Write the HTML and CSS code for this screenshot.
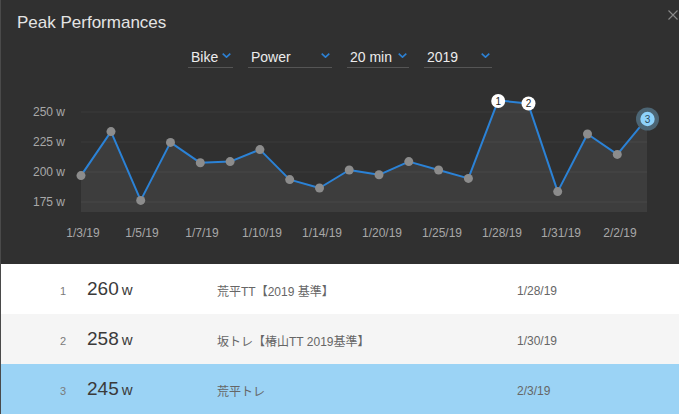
FILE: index.html
```html
<!DOCTYPE html>
<html>
<head>
<meta charset="utf-8">
<link rel="stylesheet" href="styles.css">
</head>
<body>
<div class="modal">
  <section class="top">
    <h1 class="title">Peak Performances</h1>
    <button class="close" aria-label="Close">
      <svg width="10" height="10" viewBox="0 0 10 10"><path d="M0.5 0.5L9.5 9.5M9.5 0.5L0.5 9.5" stroke="#8a8a8a" stroke-width="1.1" fill="none"/></svg>
    </button>
    <div class="filters">
      <div class="select w-bike"><span>Bike</span><svg class="chev" width="9" height="5" viewBox="0 0 9 5"><path d="M0.7 0.7L4.5 4.2L8.3 0.7" stroke="#2c80d3" stroke-width="1.6" fill="none"/></svg></div>
      <div class="select w-power"><span>Power</span><svg class="chev" width="9" height="5" viewBox="0 0 9 5"><path d="M0.7 0.7L4.5 4.2L8.3 0.7" stroke="#2c80d3" stroke-width="1.6" fill="none"/></svg></div>
      <div class="select w-min"><span>20 min</span><svg class="chev" width="9" height="5" viewBox="0 0 9 5"><path d="M0.7 0.7L4.5 4.2L8.3 0.7" stroke="#2c80d3" stroke-width="1.6" fill="none"/></svg></div>
      <div class="select w-year"><span>2019</span><svg class="chev" width="9" height="5" viewBox="0 0 9 5"><path d="M0.7 0.7L4.5 4.2L8.3 0.7" stroke="#2c80d3" stroke-width="1.6" fill="none"/></svg></div>
    </div>
    <svg class="chart" width="678" height="196" viewBox="1 68 678 196">
      <g class="ylabels">
        <text x="65" y="116">250 w</text>
        <text x="65" y="146">225 w</text>
        <text x="65" y="176">200 w</text>
        <text x="65" y="206">175 w</text>
      </g>
      <polygon class="area" points="81,175.6 111,131.6 140.7,200.4 170.5,142.4 200.3,162.8 230.1,161.6 259.9,149.6 289.7,179.6 319.5,188 349.2,170 379,174.8 408.8,161.6 438.6,170 468.4,178.4 498.2,100.4 528,103.4 557.7,191.6 587.5,134 617.3,154.4 647,118.4 647,212 81,212"/>
      <g class="grid">
        <line x1="81" y1="112" x2="647" y2="112"/>
        <line x1="81" y1="142" x2="647" y2="142"/>
        <line x1="81" y1="172" x2="647" y2="172"/>
        <line x1="81" y1="202" x2="647" y2="202"/>
      </g>
      <polyline class="line" points="81,175.6 111,131.6 140.7,200.4 170.5,142.4 200.3,162.8 230.1,161.6 259.9,149.6 289.7,179.6 319.5,188 349.2,170 379,174.8 408.8,161.6 438.6,170 468.4,178.4 498.2,100.4 528,103.4 557.7,191.6 587.5,134 617.3,154.4 647,118.4"/>
      <g class="dots">
        <circle cx="81" cy="175.6" r="4.5"/>
        <circle cx="111" cy="131.6" r="4.5"/>
        <circle cx="140.7" cy="200.4" r="4.5"/>
        <circle cx="170.5" cy="142.4" r="4.5"/>
        <circle cx="200.3" cy="162.8" r="4.5"/>
        <circle cx="230.1" cy="161.6" r="4.5"/>
        <circle cx="259.9" cy="149.6" r="4.5"/>
        <circle cx="289.7" cy="179.6" r="4.5"/>
        <circle cx="319.5" cy="188" r="4.5"/>
        <circle cx="349.2" cy="170" r="4.5"/>
        <circle cx="379" cy="174.8" r="4.5"/>
        <circle cx="408.8" cy="161.6" r="4.5"/>
        <circle cx="438.6" cy="170" r="4.5"/>
        <circle cx="468.4" cy="178.4" r="4.5"/>
        <circle cx="557.7" cy="191.6" r="4.5"/>
        <circle cx="587.5" cy="134" r="4.5"/>
        <circle cx="617.3" cy="154.4" r="4.5"/>
      </g>
      <g class="badge">
        <circle cx="498.2" cy="101" r="7"/>
        <text x="498.2" y="104.5">1</text>
        <circle cx="528.5" cy="103.5" r="7"/>
        <text x="528.5" y="107">2</text>
      </g>
      <g class="badge sel">
        <circle class="halo" cx="647.5" cy="119" r="11.5"/>
        <circle cx="647.5" cy="119" r="7.2"/>
        <text x="647.5" y="122.5">3</text>
      </g>
      <g class="xlabels">
        <text x="83" y="237">1/3/19</text>
        <text x="142" y="237">1/5/19</text>
        <text x="202" y="237">1/7/19</text>
        <text x="262" y="237">1/10/19</text>
        <text x="322" y="237">1/14/19</text>
        <text x="382" y="237">1/20/19</text>
        <text x="442" y="237">1/25/19</text>
        <text x="502" y="237">1/28/19</text>
        <text x="561" y="237">1/31/19</text>
        <text x="620" y="237">2/2/19</text>
      </g>
    </svg>
  </section>
  <section class="table">
    <div class="row">
      <span class="rank">1</span>
      <span class="val">260<small>w</small></span>
      <span class="name">荒平TT【2019 基準】</span>
      <span class="date">1/28/19</span>
    </div>
    <div class="row alt">
      <span class="rank">2</span>
      <span class="val">258<small>w</small></span>
      <span class="name">坂トレ【椿山TT 2019基準】</span>
      <span class="date">1/30/19</span>
    </div>
    <div class="row selected">
      <span class="rank">3</span>
      <span class="val">245<small>w</small></span>
      <span class="name">荒平トレ</span>
      <span class="date">2/3/19</span>
    </div>
  </section>
</div>
</body>
</html>
```
FILE: styles.css
```css
html, body {
  margin: 0;
  padding: 0;
  background: #4a4a4a;
  font-family: "Liberation Sans", Arial, "Noto Sans CJK JP", sans-serif;
}

.modal {
  width: 678px;
  height: 414px;
  margin-left: 1px;
  overflow: hidden;
}

.top {
  position: relative;
  background: #303030;
  height: 264px;
}

.title {
  margin: 0;
  padding: 12px 0 0 16px;
  height: 22px;
  line-height: 22px;
  font-size: 17px;
  font-weight: normal;
  color: #e4e4e4;
}

.close {
  position: absolute;
  top: 10px;
  right: 1px;
  width: 10px;
  height: 10px;
  padding: 0;
  border: 0;
  background: none;
  display: flex;
}

.filters {
  display: flex;
  justify-content: center;
  gap: 15px;
  margin-top: 10px;
  height: 24px;
}

.select {
  box-sizing: border-box;
  height: 24px;
  display: flex;
  align-items: center;
  justify-content: space-between;
  padding: 2px 2px 0 3px;
  border-bottom: 1px solid #555;
  color: #ececec;
  font-size: 14px;
}

.chev { margin-top: -2px; }

.w-bike { width: 45px; }
.w-power { width: 84px; }
.w-min { width: 62px; }
.w-year { width: 68px; }

.chart {
  display: block;
}

.chart text {
  font-family: "Liberation Sans", Arial, sans-serif;
  font-size: 12px;
  fill: #a8a8a8;
}

.ylabels text { text-anchor: end; }
.xlabels text { text-anchor: middle; }

.area { fill: #3d3d3d; }

.grid line {
  stroke: rgba(255, 255, 255, 0.06);
  stroke-width: 1;
}

.line {
  fill: none;
  stroke: #2b82d6;
  stroke-width: 2;
  stroke-linejoin: round;
}

.dots circle { fill: #8c8c8c; }

.badge circle { fill: #ffffff; }
.chart .badge text {
  font-size: 10px;
  fill: #222;
  text-anchor: middle;
}
.badge.sel .halo { fill: #4c6574; }
.badge.sel circle:not(.halo) { fill: #8ed2fb; }
.chart .badge.sel text { fill: #2d4b5c; }

.table {
  background: #fff;
}

.row {
  height: 50px;
  display: grid;
  grid-template-columns: 20px 144px 300px 1fr;
  align-items: center;
  padding-left: 52px;
  background: #ffffff;
}

.row.alt { background: #f5f5f5; }
.row.selected { background: #9bd3f5; }

.rank {
  text-align: center;
  font-size: 11px;
  color: #7a7a7a;
  padding-top: 3px;
}

.val {
  padding-left: 14px;
  font-size: 19px;
  color: #3a3a3a;
}

.val small {
  font-size: 15px;
  margin-left: 3px;
}

.name {
  font-family: "Liberation Sans", Arial, "Noto Sans CJK JP", sans-serif;
  font-size: 12px;
  color: #666;
  padding-top: 3px;
}

.date {
  font-size: 12px;
  color: #666;
  padding-top: 3px;
}
```
